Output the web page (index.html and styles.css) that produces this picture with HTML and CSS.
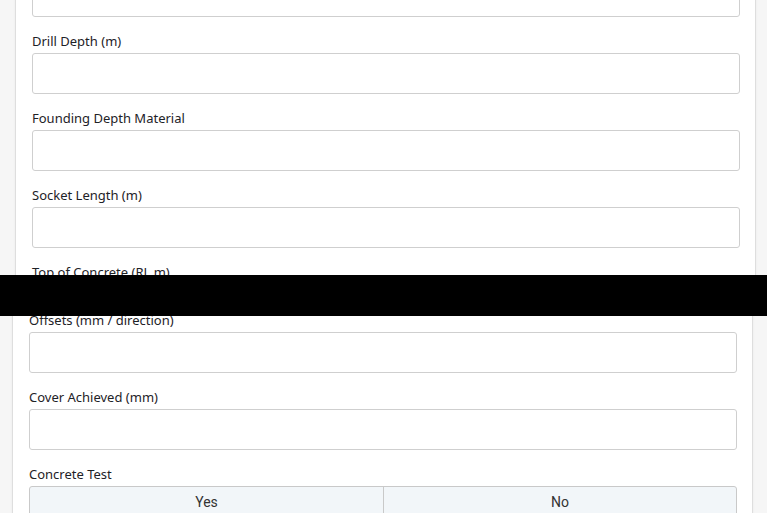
FILE: index.html
```html
<!DOCTYPE html>
<html>
<head>
<meta charset="utf-8">
<link rel="stylesheet" href="styles.css">
</head>
<body>
<div class="clip clip-top">
  <div class="card card-top">
    <div class="group first"><input class="field" type="text"></div>
    <div class="group"><label class="lbl">Drill Depth (m)</label><input class="field" type="text"></div>
    <div class="group"><label class="lbl">Founding Depth Material</label><input class="field" type="text"></div>
    <div class="group"><label class="lbl">Socket Length (m)</label><input class="field" type="text"></div>
    <div class="group"><label class="lbl">Top of Concrete (RL m)</label><input class="field" type="text"></div>
  </div>
</div>
<div class="redact"></div>
<div class="clip clip-bottom">
  <div class="card card-bottom">
    <div class="group"><label class="lbl">Offsets (mm / direction)</label><input class="field" type="text"></div>
    <div class="group"><label class="lbl">Cover Achieved (mm)</label><input class="field" type="text"></div>
    <div class="group"><label class="lbl">Concrete Test</label>
      <div class="toggle">
        <button class="opt" type="button">Yes</button>
        <button class="opt" type="button">No</button>
      </div>
    </div>
  </div>
</div>
</body>
</html>
```

FILE: styles.css
```css
html, body {
  margin: 0;
  padding: 0;
  background: #f6f6f6;
  font-family: "Noto Sans", "Open Sans", sans-serif;
  color: #212529;
}

.clip {
  overflow: hidden;
}

.clip-top {
  height: 275px;
}

.clip-bottom {
  height: 197px;
}

.card {
  background: #ffffff;
  border-left: 1px solid #dedede;
  border-right: 1px solid #dedede;
  box-shadow: 0 0 2px rgba(0, 0, 0, 0.06);
}

.card-top {
  margin: -24px 11px 0 15px;
  padding: 0 15px 0 16px;
}

.card-bottom {
  margin: -5px 14px 0 12px;
  padding: 0 15px 0 16px;
}

.group {
  margin-bottom: 15px;
}

.lbl {
  display: block;
  font-size: 13px;
  line-height: 18px;
  margin-bottom: 3px;
  color: #1e2227;
}

.field {
  display: block;
  box-sizing: border-box;
  width: 100%;
  height: 41px;
  margin: 0;
  border: 1px solid #cfcfcf;
  border-radius: 3px;
  background: #ffffff;
  font: inherit;
}

.redact {
  height: 41px;
  background: #000000;
}

.toggle {
  display: grid;
  grid-template-columns: 1fr 1fr;
  margin-top: 1px;
  border: 1px solid #c9c9c9;
  border-radius: 3px 3px 0 0;
  background: #f2f6f9;
}

.opt {
  height: 30px;
  border: 0;
  background: transparent;
  font-family: Roboto, "Liberation Sans", sans-serif;
  font-size: 14px;
  color: #333333;
  padding: 0;
  text-align: center;
  line-height: 28px;
  align-self: start;
}

.opt + .opt {
  border-left: 1px solid #c9c9c9;
}
```
